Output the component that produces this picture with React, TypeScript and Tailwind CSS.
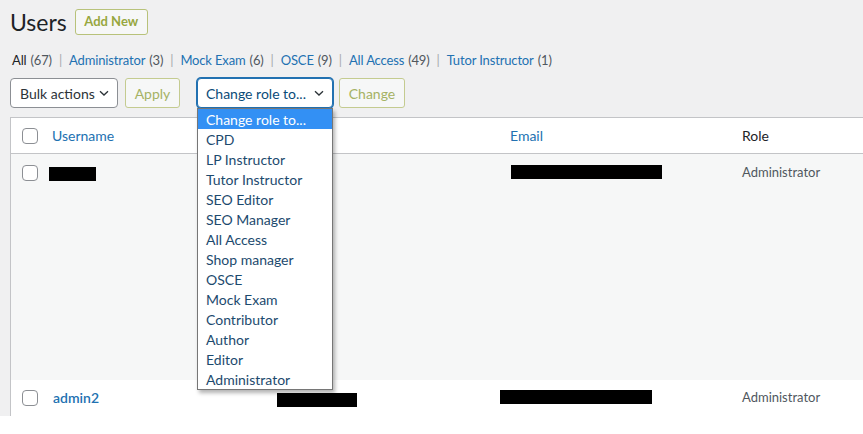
import React from "react";

const font = { fontFamily: 'Lato, "Open Sans", sans-serif' };

function Chevron() {
  return (
    <svg width="12" height="12" viewBox="0 0 12 12" className="ml-auto shrink-0">
      <path d="M2 4.2 L6 8 L10 4.2" fill="none" stroke="#2c3338" strokeWidth="1.3" />
    </svg>
  );
}

function Box() {
  return <span className="block h-4 w-4 rounded-[4px] border border-[#8c8f94] bg-white" />;
}

function Redact({ w }: { w: number }) {
  return <span className="block h-[14px] bg-black" style={{ width: w }} />;
}

const roles = [
  "Change role to...",
  "CPD",
  "LP Instructor",
  "Tutor Instructor",
  "SEO Editor",
  "SEO Manager",
  "All Access",
  "Shop manager",
  "OSCE",
  "Mock Exam",
  "Contributor",
  "Author",
  "Editor",
  "Administrator",
];

const filters: [string, number][] = [
  ["Administrator", 3],
  ["Mock Exam", 6],
  ["OSCE", 9],
  ["All Access", 49],
  ["Tutor Instructor", 1],
];

export default function App() {
  return (
    <div className="h-[434px] w-[863px] overflow-hidden bg-white whitespace-nowrap" style={font}>
      <div className="h-[416px] bg-[#f0f0f1] pl-[10px] pt-[9px]">
        {/* heading */}
        <div className="flex h-[26px] items-center">
          <h1 className="text-[23px] leading-none text-[#1d2327]">Users</h1>
          <button className="ml-[8px] h-[26px] w-[73px] rounded-[3px] border border-[#b8c27a] bg-[#f6f7f7] text-[13px] font-bold text-[#97a740]">
            Add New
          </button>
        </div>

        {/* role filters */}
        <div className="mt-[16px] flex h-[20px] items-center pl-[2px] text-[13px] tracking-[-0.15px] text-[#50575e]">
          <span className="text-[#1d2327]">All</span>
          <span className="ml-[4px]">(67)</span>
          {filters.map(([label, n]) => (
            <React.Fragment key={label}>
              <span className="mx-[7px] text-[#a7aaad]">|</span>
              <span className="text-[#2271b1]">{label}</span>
              <span className="ml-[4px]">({n})</span>
            </React.Fragment>
          ))}
        </div>

        {/* bulk actions */}
        <div className="mt-[7px] flex h-[30px] items-center">
          <div className="flex h-[30px] w-[108px] items-center rounded-[4px] border border-[#8c8f94] bg-white pl-[9px] pr-[7px] text-[14px] text-[#2c3338]">
            Bulk actions
            <Chevron />
          </div>
          <button className="ml-[7px] h-[30px] w-[55px] rounded-[3px] border border-[#c4cb90] bg-[#f6f7f7] text-[14px] text-[#a5b264]">
            Apply
          </button>
          <div className="relative ml-[17px]">
            <div className="flex h-[30px] w-[136px] items-center rounded-[4px] border border-[#2271b1] bg-white pl-[8px] pr-[7px] text-[14px] text-[#0a4b78] shadow-[0_0_0_1px_#2271b1]">
              Change role to...
              <Chevron />
            </div>
            <ul className="absolute left-0 top-[30px] z-10 w-[136px] border border-[#767676] bg-white text-[14px] text-[#1c4a6e] shadow-[2px_3px_4px_rgba(0,0,0,0.3)]">
              {roles.map((r, i) => (
                <li
                  key={r}
                  className={
                    "flex h-[20px] items-center pl-[8px] " +
                    (i === 0 ? "bg-[#3390f4] text-white" : "")
                  }
                >
                  {r}
                </li>
              ))}
            </ul>
          </div>
          <button className="ml-[6px] h-[30px] w-[66px] rounded-[3px] border border-[#c4cb90] bg-[#f6f7f7] text-[14px] text-[#a5b264]">
            Change
          </button>
        </div>

        {/* users table */}
        <div className="mt-[9px] border-l border-t border-[#c3c4c7] text-[14px]">
          <div className="grid h-[36px] grid-cols-[31px_225px_233px_232px_1fr] items-center border-b border-[#c3c4c7] bg-white">
            <div className="pl-[11px]">
              <Box />
            </div>
            <div className="pl-[10px] text-[#2271b1]">Username</div>
            <div />
            <div className="pl-[10px] text-[#2271b1]">Email</div>
            <div className="pl-[10px] text-[#1d2327]">Role</div>
          </div>

          <div className="grid h-[226px] grid-cols-[31px_225px_233px_232px_1fr] items-start bg-[#f6f7f7] pt-[11px]">
            <div className="pl-[11px]">
              <Box />
            </div>
            <div className="pl-[7px] pt-[2px]">
              <Redact w={47} />
            </div>
            <div />
            <div className="pl-[11px]">
              <Redact w={151} />
            </div>
            <div className="pl-[10px] text-[13px] leading-[14px] text-[#50575e]">Administrator</div>
          </div>

          <div className="grid h-[36px] grid-cols-[31px_225px_233px_232px_1fr] items-center bg-white">
            <div className="pl-[11px]">
              <Box />
            </div>
            <div className="pb-[2px] pl-[11px] text-[14px] font-semibold text-[#2271b1]">admin2</div>
            <div className="pl-[10px] pt-[4px]">
              <Redact w={80} />
            </div>
            <div className="pb-[2px]">
              <Redact w={152} />
            </div>
            <div className="pl-[10px] text-[13px] text-[#50575e]">Administrator</div>
          </div>
        </div>
      </div>
    </div>
  );
}
